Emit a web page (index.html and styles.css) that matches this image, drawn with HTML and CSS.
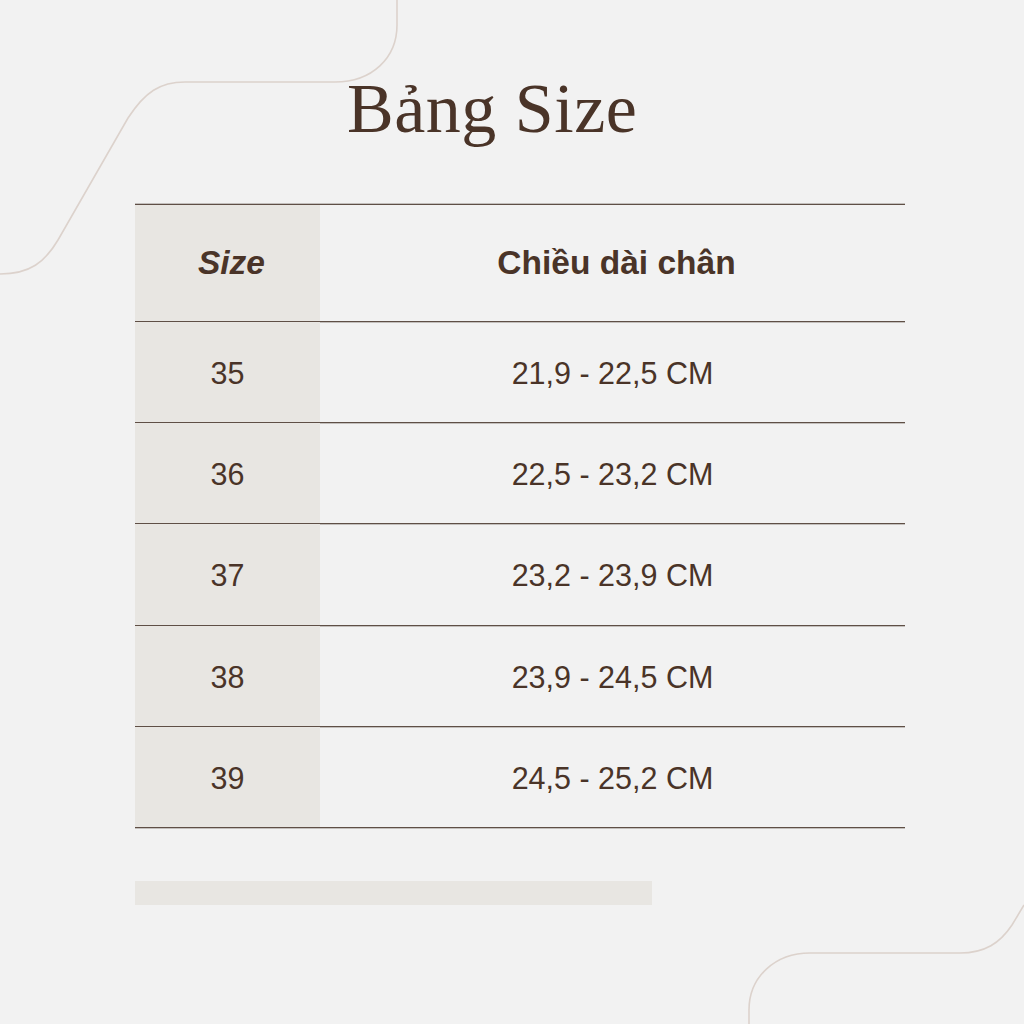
FILE: index.html
```html
<!DOCTYPE html>
<html lang="vi">
<head>
<meta charset="utf-8">
<title>Bảng Size</title>
<link rel="stylesheet" href="styles.css">
</head>
<body>
<svg class="deco" width="1024" height="1024" viewBox="0 0 1024 1024" aria-hidden="true">
  <path d="M0 274 C30 274 45 262 58 240 L128 118 C145 92 160 82 185 82 L335 82 C372 82 397 58 397 25 L397 0" />
  <path d="M749 1024 L749 1010 C749 977 775 953 810 953 L960 953 C985 953 1000 943 1012 925 L1024 905" />
</svg>
<main class="page">
  <h1 class="title">Bảng Size</h1>
  <section class="table">
    <div class="row head">
      <div class="cell size">Size</div>
      <div class="cell len">Chiều dài chân</div>
    </div>
    <div class="row"><div class="cell size">35</div><div class="cell len">21,9 - 22,5 CM</div></div>
    <div class="row"><div class="cell size">36</div><div class="cell len">22,5 - 23,2 CM</div></div>
    <div class="row tall"><div class="cell size">37</div><div class="cell len">23,2 - 23,9 CM</div></div>
    <div class="row"><div class="cell size">38</div><div class="cell len">23,9 - 24,5 CM</div></div>
    <div class="row"><div class="cell size">39</div><div class="cell len">24,5 - 25,2 CM</div></div>
  </section>
  <div class="bar"></div>
</main>
</body>
</html>
```
FILE: styles.css
```css
html, body {
  margin: 0;
  padding: 0;
  background: #f2f2f2;
}
body {
  width: 1024px;
  height: 1024px;
  overflow: hidden;
  position: relative;
  color: #4a3428;
  font-family: "Liberation Sans", Arial, sans-serif;
}
.deco {
  position: absolute;
  left: 0;
  top: 0;
  fill: none;
  stroke: #dcd2cc;
  stroke-width: 1.6;
}
.page {
  position: relative;
  padding: 0 119px 0 135px;
}
.title {
  margin: 74px 0 0 212px;
  height: 70px;
  font-family: "Liberation Serif", "Times New Roman", serif;
  font-weight: 400;
  font-size: 70px;
  line-height: 70px;
  color: #4a3428;
  letter-spacing: 0.5px;
}
.table {
  margin-top: 60px;
  border-top: 1px solid #5f4f46;
  box-shadow: 0 -1px 0 rgba(110, 96, 89, 0.35);
}
.row {
  display: grid;
  grid-template-columns: 185px 1fr;
  height: 101px;
  border-bottom: 1px solid #5f4f46;
  box-shadow: 0 1px 0 rgba(110, 96, 89, 0.35);
  box-sizing: border-box;
}
.row.head {
  height: 117px;
}
.row.tall {
  height: 102px;
}
.cell {
  display: flex;
  align-items: center;
  justify-content: center;
  padding-top: 2px;
  font-size: 30.5px;
}
.cell.size {
  background: #e8e6e2;
}
.head .cell {
  padding-top: 0;
  font-weight: 700;
  font-size: 33.5px;
}
.head .cell.size {
  font-style: italic;
  padding-left: 8px;
}
.head .cell.len {
  padding-left: 8px;
}
.bar {
  margin-top: 53px;
  width: 517px;
  height: 24px;
  background: #e8e6e2;
}
```
